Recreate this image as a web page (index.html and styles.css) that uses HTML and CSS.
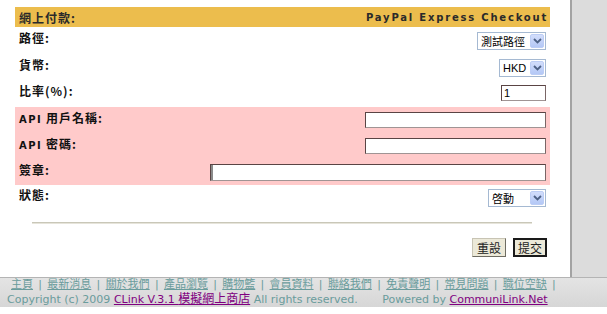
FILE: index.html
```html
<!DOCTYPE html>
<html>
<head>
<meta charset="utf-8">
<link rel="stylesheet" href="styles.css">
</head>
<body>
<div class="page">
  <div class="main">
    <div class="form">
      <div class="head">
        <span class="head-l">網上付款:</span>
        <span class="head-r">PayPal Express Checkout</span>
      </div>
      <div class="row r27">
        <div class="lbl">路徑:</div>
        <div class="ctl"><span class="sel w69"><span class="sel-t">測試路徑</span><span class="arr"><svg width="9" height="6" viewBox="0 0 9 6"><path d="M1 1 L4.5 4.5 L8 1" fill="none" stroke="#4d6185" stroke-width="1.8"/></svg></span></span></div>
      </div>
      <div class="row r26">
        <div class="lbl">貨幣:</div>
        <div class="ctl"><span class="sel w47"><span class="sel-t lat-t">HKD</span><span class="arr"><svg width="9" height="6" viewBox="0 0 9 6"><path d="M1 1 L4.5 4.5 L8 1" fill="none" stroke="#4d6185" stroke-width="1.8"/></svg></span></span></div>
      </div>
      <div class="row r27">
        <div class="lbl">比率(%):</div>
        <div class="ctl"><input class="inp w45" type="text" value="1"></div>
      </div>
      <div class="pink">
        <div class="row r26">
          <div class="lbl"><span class="lat">API</span> 用戶名稱:</div>
          <div class="ctl"><input class="inp w181" type="text"></div>
        </div>
        <div class="row r26">
          <div class="lbl"><span class="lat">API</span> 密碼:</div>
          <div class="ctl"><input class="inp w181" type="password"></div>
        </div>
        <div class="row r26">
          <div class="lbl">簽章:</div>
          <div class="ctl"><input class="inp w336 caret" type="text"></div>
        </div>
      </div>
      <div class="row r27 st">
        <div class="lbl">狀態:</div>
        <div class="ctl"><span class="sel w58"><span class="sel-t">啓動</span><span class="arr"><svg width="9" height="6" viewBox="0 0 9 6"><path d="M1 1 L4.5 4.5 L8 1" fill="none" stroke="#4d6185" stroke-width="1.8"/></svg></span></span></div>
      </div>
      <div class="rule"></div>
      <div class="btns">
        <button class="btn" type="button">重設</button>
        <button class="btn def" type="button">提交</button>
      </div>
    </div>
  </div>
  <div class="side"></div>
</div>
<div class="foot">
  <div class="links"><a href="#">主頁</a> | <a href="#">最新消息</a> | <a href="#">關於我們</a> | <a href="#">產品瀏覽</a> | <a href="#">購物籃</a> | <a href="#">會員資料</a> | <a href="#">聯絡我們</a> | <a href="#">免責聲明</a> | <a href="#">常見問題</a> | <a href="#">職位空缺</a> |</div>
  <div class="copy">Copyright (c) 2009 <a class="v" href="#">CLink V.3.1 <span class="cjk">模擬網上商店</span></a> All rights reserved.&nbsp;&nbsp;&nbsp;&nbsp;&nbsp;&nbsp;&nbsp;Powered by <a class="v" href="#">CommuniLink.Net</a></div>
</div>
</body>
</html>
```

FILE: styles.css
```css
html, body {
  margin: 0;
  padding: 0;
  background: #fff;
}
body {
  font-family: "DejaVu Sans", "Noto Sans CJK TC", sans-serif;
  font-size: 12px;
  color: #111;
}
.page {
  display: flex;
  height: 277px;
}
.main {
  width: 570px;
  background: #fff;
  padding: 7px 0 0 15px;
  box-sizing: border-box;
}
.side {
  flex: 1;
  background: #dcdcdc;
  border-left: 2px solid #a3a3a3;
}
.form {
  width: 535px;
}
.head {
  height: 20px;
  background: #ecbd4d;
  display: flex;
  align-items: center;
  justify-content: space-between;
  padding: 0 2px 0 4px;
  color: #2a2a2a;
  font-weight: bold;
}
.head-l {
  font-size: 12px;
  letter-spacing: 1px;
  font-family: "Noto Sans CJK TC", sans-serif;
}
.head-r {
  font-size: 10px;
  letter-spacing: 1.8px;
  font-family: "DejaVu Sans", sans-serif;
}
.row {
  display: flex;
  box-sizing: border-box;
  padding-top: 5px;
}
.r26 { height: 26px; }
.r27 { height: 27px; }
.st { padding-top: 4px; }
.pink {
  background: #ffcaca;
}
.lbl {
  width: 195px;
  padding-left: 4px;
  margin-top: -1px;
  font-family: "Noto Sans CJK TC", sans-serif;
  font-weight: bold;
  font-size: 12px;
  line-height: 14px;
  letter-spacing: 1px;
  color: #111;
}
.lat {
  font-family: "DejaVu Sans", sans-serif;
  font-size: 10px;
  letter-spacing: 1.5px;
}
.ctl {
  flex: 1;
  display: flex;
  justify-content: flex-end;
  padding-right: 4px;
}
.sel {
  display: flex;
  align-items: center;
  justify-content: space-between;
  height: 18px;
  box-sizing: border-box;
  border: 1px solid #a5b9d2;
  background: #fff;
}
.w69 { width: 69px; }
.w47 { width: 47px; }
.w58 { width: 58px; }
.sel-t {
  padding-left: 3px;
  font-family: "Noto Sans CJK TC", sans-serif;
  font-size: 11px;
  line-height: 14px;
  color: #000;
}
.lat-t {
  font-family: "Liberation Sans", sans-serif;
  font-size: 11px;
}
.arr {
  width: 14px;
  height: 14px;
  margin-right: 1px;
  box-sizing: border-box;
  border: 1px solid #bccdf5;
  border-radius: 2px;
  background: linear-gradient(#d2ddfb, #b4c8f6);
  display: flex;
  align-items: center;
  justify-content: center;
}
.inp {
  margin: 0;
  padding: 0 2px;
  height: 16px;
  box-sizing: border-box;
  border: 1px solid;
  border-color: #5a4444 #7a6666 #a09494 #5a4444;
  background: #fff;
  font-family: "Liberation Sans", sans-serif;
  font-size: 11px;
  color: #000;
  outline: none;
}
.w45 { width: 45px; }
.w181 { width: 181px; }
.w336 { width: 336px; height: 17px; }
.caret { box-shadow: inset 2px 0 0 #8a8a8a; }
.rule {
  margin: 10px 18px 0 17px;
  height: 0;
  border-top: 1px solid #c9c7b8;
  border-bottom: 1px solid #e6e4da;
}
.btns {
  display: flex;
  justify-content: flex-end;
  gap: 7px;
  padding: 14px 3px 0 0;
}
.btn {
  margin: 0;
  padding: 0;
  width: 34px;
  height: 19px;
  box-sizing: border-box;
  background: #ece9d8;
  border: 1px solid;
  border-color: #c8c4b4 #6e6c62 #6e6c62 #c8c4b4;
  font-family: "Noto Sans CJK TC", sans-serif;
  font-size: 12px;
  line-height: 15px;
  color: #222;
}
.btn.def {
  border: 2px solid #1a1a1a;
}
.foot {
  height: 30px;
  box-sizing: border-box;
  border-top: 1px solid #b4b4b4;
  background: linear-gradient(#e4e4e4, #d6d6d6);
  font-family: "DejaVu Sans", "Noto Sans CJK TC", sans-serif;
  font-size: 11px;
  line-height: 14px;
  color: #6a9c9c;
}
.links {
  padding-left: 11px;
  word-spacing: 1.8px;
  white-space: nowrap;
}
.links a {
  color: #6a9c9c;
  text-decoration: underline;
}
.copy {
  padding-left: 7px;
  white-space: nowrap;
}
.copy a.v {
  color: #800080;
  text-decoration: underline;
}
.cjk {
  font-size: 12px;
}
```
